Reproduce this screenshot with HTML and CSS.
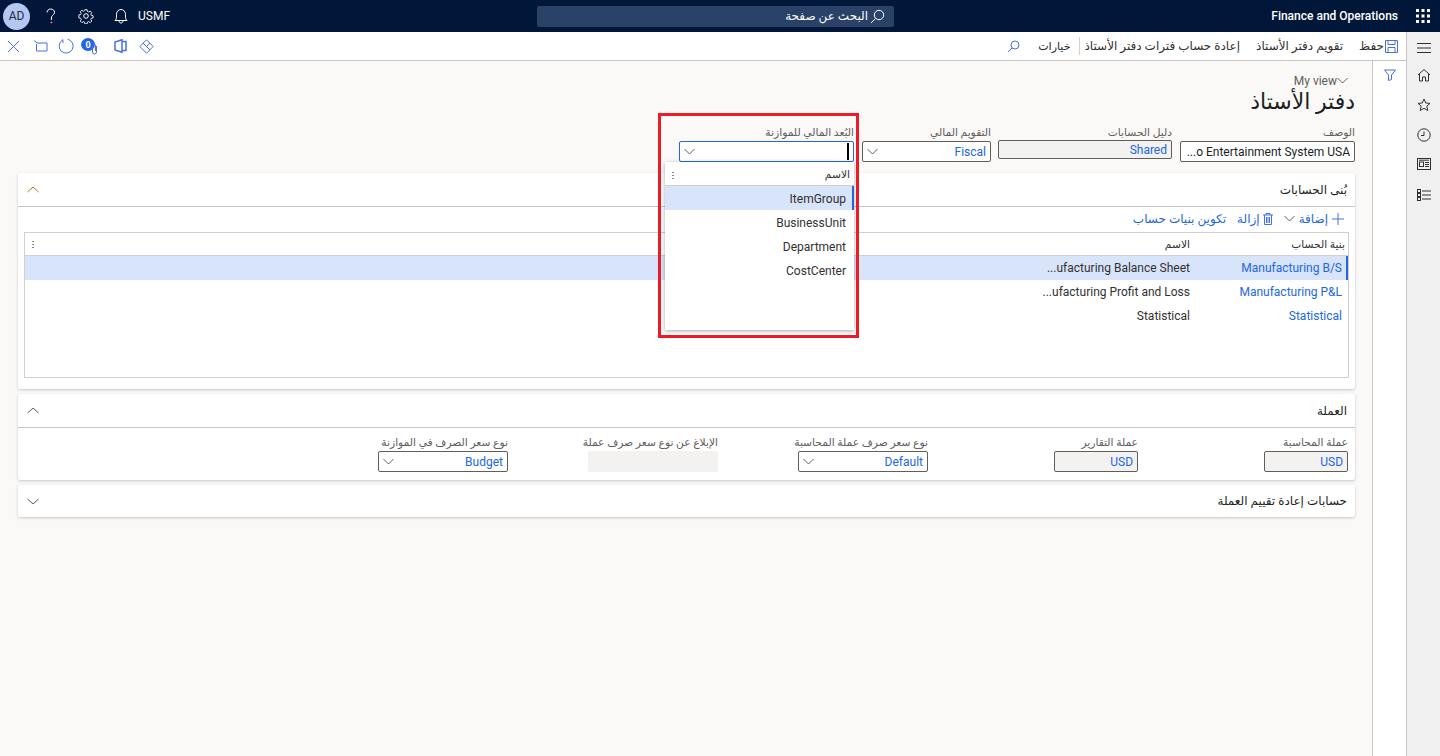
FILE: index.html
```html
<!DOCTYPE html>
<html lang="ar" dir="rtl">
<head>
  <meta charset="UTF-8" />
  <title>Finance and Operations</title>
  <link rel="stylesheet" href="styles.css">
</head>
<body>
  <header class="topbar" dir="ltr">
    <div class="top-left">
      <span class="avatar">AD</span>
      <svg class="top-icon help" width="10" height="16" viewBox="0 0 10 16"><path d="M1 4.500C1 2.500 2.700 1 4.700 1S8.500 2.300 8.500 4.200c0 1.500-.9 2.300-1.900 3.100-.9.700-1.200 1.500-1.200 4.700"/><circle cx="5.400" cy="14.500" r=".6" class="solid"/></svg>
      <svg class="top-icon gear" width="16" height="16" viewBox="0 0 16 16"><circle cx="8" cy="8" r="2.300"/><path d="M6.800 1h2.400l.4 2 1.400.6 1.700-1.100 1.700 1.700-1.100 1.700.6 1.400 2 .4v2.400l-2 .4-.6 1.400 1.100 1.700-1.700 1.700-1.700-1.100-1.400.6-.4 2H6.800l-.4-2-1.400-.6-1.700 1.100-1.700-1.700 1.100-1.700-.6-1.400-2-.4V6.800l2-.4.6-1.400-1.100-1.700 1.700-1.700L5 2.700l1.400-.6z" transform="translate(.8 .8) scale(.9)"/></svg>
      <svg class="top-icon bell" width="14" height="16" viewBox="0 0 14 16"><path d="M1 12.500c1.200-1 1.500-2.200 1.500-4.500V6.500C2.500 3.500 4.500 1.500 7 1.500s4.500 2 4.500 5V8c0 2.300.3 3.500 1.500 4.500zM5 13c0 1.200.9 2 2 2s2-.8 2-2"/></svg>
      <span class="company">USMF</span>
    </div>
    <div class="search-box" dir="rtl">
      <svg width="15" height="15" viewBox="0 0 15 15" class="top-icon"><circle cx="9" cy="6" r="4.700"/><path d="M5.500 9.500L1 14"/></svg>
      <span>البحث عن صفحة</span>
    </div>
    <div class="top-right">
      <span class="app-name">Finance and Operations</span>
      <svg width="14" height="14" viewBox="0 0 14 14" class="waffle">
        <rect x="0" y="0" width="3" height="3"/><rect x="5.500" y="0" width="3" height="3"/><rect x="11" y="0" width="3" height="3"/>
        <rect x="0" y="5.500" width="3" height="3"/><rect x="5.500" y="5.500" width="3" height="3"/><rect x="11" y="5.500" width="3" height="3"/>
        <rect x="0" y="11" width="3" height="3"/><rect x="5.500" y="11" width="3" height="3"/><rect x="11" y="11" width="3" height="3"/>
      </svg>
    </div>
  </header>

  <div class="shell">
    <nav class="nav-rail">
      <svg class="rail-icon first" width="16" height="12" viewBox="0 0 16 12"><path d="M1 1.500h14M1 6h14M1 10.500h14"/></svg>
      <svg class="rail-icon" width="14" height="14" viewBox="0 0 14 14"><path d="M1 7l6-5.500L13 7M2.500 6v7h3V9h3v4h3V6"/></svg>
      <svg class="rail-icon" width="14" height="14" viewBox="0 0 14 14"><path d="M7 1l1.800 4 4.200.4-3.200 2.800 1 4.300L7 10.300l-3.800 2.200 1-4.300L1 5.400 5.200 5z"/></svg>
      <svg class="rail-icon" width="14" height="14" viewBox="0 0 14 14"><circle cx="7" cy="7" r="6.200"/><path d="M7 3.500V7.500H4"/></svg>
      <svg class="rail-icon" width="14" height="12" viewBox="0 0 14 12"><rect x=".5" y=".5" width="13" height="11"/><rect x="2.500" y="4" width="4" height="4.500"/><path d="M2 2.200h10M8 4.500h4M8 6.500h4M8 8.500h4"/></svg>
      <svg class="rail-icon last" width="14" height="12" viewBox="0 0 14 12"><rect x=".5" y=".5" width="3" height="3"/><rect x=".5" y="4.500" width="3" height="3"/><rect x=".5" y="8.500" width="3" height="3"/><path d="M5 2h9M5 6h9M5 10h9"/></svg>
    </nav>

    <div class="main-col">
      <div class="actionbar">
        <div class="action-group">
          <button class="action save">
            <svg width="13" height="13" viewBox="0 0 13 13" class="blue-icon"><path d="M.5.500h12v12H.5zM3 .5v4h7v-4M3 12.500V7.500h7v5"/></svg>
            حفظ
          </button>
          <button class="action">تقويم دفتر الأستاذ</button>
          <button class="action">إعادة حساب فترات دفتر الأستاذ</button>
          <span class="action-sep"></span>
          <button class="action options">خيارات</button>
          <svg width="13" height="13" viewBox="0 0 13 13" class="blue-icon find"><circle cx="8" cy="5" r="4"/><path d="M5 8L1 12"/></svg>
        </div>
        <div class="action-tools">
          <svg width="15" height="15" viewBox="0 0 15 15" class="blue-icon tool-close"><path d="M2 2l11 11M13 2L2 13"/></svg>
          <svg width="15" height="12" viewBox="0 0 15 12" class="blue-icon tool-folder"><path d="M4 3h10v8H3.500V4M1 .5l3 2.500"/></svg>
          <svg width="16" height="16" viewBox="0 0 16 16" class="blue-icon tool-refresh"><path d="M4.800 1.500L5 5M5 1.800A7 7 0 1 0 9.500 1.200"/></svg>
          <span class="attach">
            <span class="badge">0</span>
            <svg width="7" height="12" viewBox="0 0 7 12" class="blue-icon clip"><path d="M5.500 3v6a2 2 0 0 1-4 0V2.500a1.500 1.500 0 0 1 3 0V8"/></svg>
          </span>
          <svg width="13" height="14" viewBox="0 0 13 14" class="blue-icon tool-office"><path d="M8 .8L1 3v8l7 2.300zM8 2.500h4v9H8" stroke-width="1.500"/></svg>
          <svg width="15" height="15" viewBox="0 0 15 15" class="blue-icon tool-diamond"><path d="M7.500.8l6.700 6.700-6.700 6.700L.8 7.500zM4 4l7 7M11 4l-3.500 3.500"/></svg>
        </div>
      </div>

      <div class="work-row">
        <aside class="filter-pane">
          <svg width="12" height="12" viewBox="0 0 12 12" class="blue-icon"><path d="M.5 1h11L7.500 6v4.500l-3 1V6z"/></svg>
        </aside>

        <main class="content">
          <div class="view-switch" dir="ltr">
            <span>My view</span>
            <svg width="11" height="7" viewBox="0 0 11 7" class="chev"><path d="M.5 1l5 5 5-5"/></svg>
          </div>
          <h1 class="page-title">دفتر الأستاذ</h1>

          <div class="head-fields">
            <div class="field desc">
              <label>الوصف</label>
              <div class="input"><bdi dir="ltr" class="dark">...o Entertainment System USA</bdi></div>
            </div>
            <div class="field chart">
              <label>دليل الحسابات</label>
              <div class="input readonly"><bdi dir="ltr" class="link">Shared</bdi></div>
            </div>
            <div class="field fiscal">
              <label>التقويم المالي</label>
              <div class="input select"><bdi dir="ltr" class="link">Fiscal</bdi><svg width="11" height="7" viewBox="0 0 11 7" class="chev"><path d="M.5 1l5 5 5-5"/></svg></div>
            </div>
            <div class="field budget">
              <label>البُعد المالي للموازنة</label>
              <div class="input select focused"><span class="caret"></span><svg width="11" height="7" viewBox="0 0 11 7" class="chev"><path d="M.5 1l5 5 5-5"/></svg></div>
              <div class="lookup">
                <div class="lookup-head"><span>الاسم</span><span class="dots"></span></div>
                <div class="lookup-row selected" dir="ltr">ItemGroup</div>
                <div class="lookup-row" dir="ltr">BusinessUnit</div>
                <div class="lookup-row" dir="ltr">Department</div>
                <div class="lookup-row" dir="ltr">CostCenter</div>
              </div>
              <div class="callout"></div>
            </div>
          </div>

          <section class="panel">
            <div class="panel-head">
              <h2>بُنى الحسابات</h2>
              <svg width="12" height="7" viewBox="0 0 12 7" class="panel-chev orange"><path d="M.5 6l5.500-5 5.500 5"/></svg>
            </div>
            <div class="panel-body">
              <div class="grid-tools">
                <span class="tool add">
                  <svg width="12" height="12" viewBox="0 0 12 12" class="blue-icon"><path d="M6 0v12M0 6h12"/></svg>
                  إضافة
                  <svg width="11" height="7" viewBox="0 0 11 7" class="chev"><path d="M.5 1l5 5 5-5"/></svg>
                </span>
                <span class="tool">
                  <svg width="10" height="12" viewBox="0 0 10 12" class="blue-icon"><path d="M0 2h10M3 2V.5h4V2M1.500 2v9.500h7V2M3.500 4v6M5 4v6M6.500 4v6"/></svg>
                  إزالة
                </span>
                <span class="tool">تكوين بنيات حساب</span>
              </div>
              <div class="grid">
                <div class="grid-head">
                  <span class="col-a">بنية الحساب</span>
                  <span class="col-b">الاسم</span>
                  <span class="dots"></span>
                </div>
                <div class="grid-row selected">
                  <span class="col-a"><bdi dir="ltr" class="link">Manufacturing B/S</bdi></span>
                  <span class="col-b"><bdi dir="ltr">...ufacturing Balance Sheet</bdi></span>
                </div>
                <div class="grid-row">
                  <span class="col-a"><bdi dir="ltr" class="link">Manufacturing P&amp;L</bdi></span>
                  <span class="col-b"><bdi dir="ltr">...ufacturing Profit and Loss</bdi></span>
                </div>
                <div class="grid-row">
                  <span class="col-a"><bdi dir="ltr" class="link">Statistical</bdi></span>
                  <span class="col-b"><bdi dir="ltr">Statistical</bdi></span>
                </div>
              </div>
            </div>
          </section>

          <section class="panel">
            <div class="panel-head">
              <h2>العملة</h2>
              <svg width="12" height="7" viewBox="0 0 12 7" class="panel-chev"><path d="M.5 6l5.500-5 5.500 5"/></svg>
            </div>
            <div class="currency-grid">
              <div class="field small">
                <label>عملة المحاسبة</label>
                <div class="input readonly"><bdi dir="ltr" class="link">USD</bdi></div>
              </div>
              <div class="field small">
                <label>عملة التقارير</label>
                <div class="input readonly"><bdi dir="ltr" class="link">USD</bdi></div>
              </div>
              <div class="field">
                <label>نوع سعر صرف عملة المحاسبة</label>
                <div class="input select"><bdi dir="ltr" class="link">Default</bdi><svg width="11" height="7" viewBox="0 0 11 7" class="chev"><path d="M.5 1l5 5 5-5"/></svg></div>
              </div>
              <div class="field">
                <label>الإبلاغ عن نوع سعر صرف عملة</label>
                <div class="input empty"></div>
              </div>
              <div class="field">
                <label>نوع سعر الصرف في الموازنة</label>
                <div class="input select"><bdi dir="ltr" class="link">Budget</bdi><svg width="11" height="7" viewBox="0 0 11 7" class="chev"><path d="M.5 1l5 5 5-5"/></svg></div>
              </div>
            </div>
          </section>

          <section class="panel">
            <div class="panel-head closed">
              <h2>حسابات إعادة تقييم العملة</h2>
              <svg width="12" height="7" viewBox="0 0 12 7" class="panel-chev"><path d="M.5 1l5.500 5 5.500-5"/></svg>
            </div>
          </section>
        </main>
      </div>
    </div>
  </div>
</body>
</html>
```

FILE: styles.css
```css
* { box-sizing: border-box; }
html, body { margin: 0; height: 100%; overflow: hidden; }
body { font-family: Roboto, "DejaVu Sans", sans-serif; font-size: 12px; color: #323130; background: #faf9f8; }
svg { fill: none; flex: none; display: block; }
h1, h2 { margin: 0; font-weight: normal; }
button { font: inherit; color: inherit; background: none; border: none; padding: 0; }

/* top bar */
.topbar { height: 32px; background: #00173a; color: #fff; display: grid; grid-template-columns: 537px 357px 1fr; align-items: center; }
.top-left { display: flex; align-items: center; }
.avatar { width: 27px; height: 27px; margin-left: 3px; border-radius: 50%; background: #b4c7f0; color: #1d2b45; font-size: 12px; display: flex; align-items: center; justify-content: center; }
.top-icon { stroke: #fff; stroke-width: 1; }
.top-icon .solid { fill: #fff; stroke: #ef6950; }
.help { margin-left: 16px; }
.gear { margin-left: 22px; }
.bell { margin-left: 20px; }
.company { margin-left: 10px; font-size: 12px; }
.search-box { height: 21px; background: #2a4268; border-radius: 2px; display: flex; align-items: center; gap: 2px; padding-right: 9px; font-size: 12px; }
.top-right { display: flex; align-items: center; justify-content: flex-end; padding-right: 10px; gap: 18px; }
.app-name { font-size: 12px; font-weight: 500; }
.waffle { fill: #fff; }

/* shell */
.shell { display: flex; height: 724px; }
.nav-rail { width: 34px; background: #f0f0f0; border-left: 1px solid #c8c6c4; display: flex; flex-direction: column; align-items: center; padding-top: 10px; gap: 16px; }
.rail-icon { stroke: #323130; stroke-width: 1; }
.rail-icon.first { margin-bottom: -2px; }
.rail-icon.last { margin-top: 3px; }
.main-col { flex: 1; display: flex; flex-direction: column; min-width: 0; }

/* action bar */
.actionbar { height: 29px; flex: none; background: #fff; border-bottom: 1px solid #c8c6c4; display: flex; justify-content: space-between; align-items: center; padding: 0 8px 0 6px; }
.action-group { display: flex; align-items: center; gap: 16px; }
.action { font-size: 12px; display: flex; align-items: center; gap: 1px; white-space: nowrap; }
.action.options { font-size: 11px; color: #201f1e; }
.action-sep { width: 1px; height: 18px; background: #d2d0ce; margin: 0 -12px 0 -7px; }
.find { margin-right: 2px; }
.blue-icon { stroke: #4a6fe0; stroke-width: 1; }
.action-tools { display: flex; align-items: center; flex-direction: row-reverse; }
.tool-folder { margin-left: 12px; }
.tool-refresh { margin-left: 10px; }
.attach { position: relative; width: 18px; height: 16px; margin-left: 7px; }
.tool-office { margin-left: 15px; }
.tool-diamond { margin-left: 12px; }
.badge { position: absolute; left: 0; top: 0; width: 14px; height: 13px; border-radius: 50%; background: #2266e3; color: #fff; font-size: 9px; font-weight: 700; display: flex; align-items: center; justify-content: center; }
.clip { position: absolute; left: 10px; top: 5px; }

/* work area */
.work-row { flex: 1; display: flex; min-height: 0; }
.filter-pane { width: 34px; flex: none; background: #fff; border-left: 1px solid #c8c6c4; padding-top: 8px; display: flex; justify-content: center; }
.content { flex: 1; min-width: 0; padding: 12px 17px 0 18px; }
.view-switch { display: flex; justify-content: flex-end; align-items: center; color: #605e5c; font-size: 12px; height: 15px; margin-right: 7px; }
.chev { stroke: #605e5c; stroke-width: 1; }
.page-title { font-size: 22px; line-height: 28px; color: #201f1e; }

/* fields */
.head-fields { display: flex; gap: 8px; margin-top: 10px; }
.field { display: flex; flex-direction: column; position: relative; }
.field label { font-size: 10.700px; color: #605e5c; line-height: 14px; white-space: nowrap; height: 15px; }
.input { height: 21px; background: #fff; border: 1px solid #605e5c; border-radius: 2px; display: flex; align-items: center; justify-content: space-between; padding: 0 4px; font-size: 12px; white-space: nowrap; }
.input.readonly { background: #f3f2f1; }
.input.empty { background: #f3f2f1; border-color: transparent; }
.link { color: #2266e3; }
.dark { color: #201f1e; }
.desc { width: 175px; }
.chart { width: 174px; margin-left: -1px; }
.chart .input { height: 19px; margin-top: -1px; }
.fiscal { width: 129px; }
.budget { width: 175px; }
.input.focused { border-color: #2266e3; }
.caret { width: 2px; height: 17px; background: #000; }

/* lookup dropdown */
.lookup { position: absolute; top: 36px; right: 0; left: -14px; height: 168px; background: #fff; box-shadow: 0 1px 4px rgba(0,0,0,.35); z-index: 2; }
.lookup-head { height: 24px; padding: 2px 4px 0 7px; display: flex; justify-content: space-between; align-items: center; font-size: 10.700px; border-bottom: 1px solid #d2d0ce; }
.dots { width: 2px; height: 8px; background: radial-gradient(circle, #8a8886 1px, transparent 1px) 0 0 / 2px 3px; }
.lookup-row { height: 24px; line-height: 26px; text-align: right; padding-right: 8px; font-size: 12px; }
.lookup-row.selected { background: #d8e4fa; border-right: 2px solid #2266e3; padding-right: 6px; }
.callout { position: absolute; top: -13px; right: -5px; width: 201px; height: 225px; border: 3px solid #ed1c24; z-index: 3; }

/* panels */
.panel { background: #fff; border-radius: 2px; box-shadow: 0 1px 3px rgba(0,0,0,.2); margin-top: 5px; }
.head-fields + .panel { margin-top: 11px; }
.panel-head { height: 34px; border-bottom: 1px solid #c8c6c4; display: flex; align-items: center; justify-content: space-between; padding: 0 8px 0 9px; }
.panel-head.closed { height: 32px; border-bottom: none; }
.panel-head h2 { font-size: 12px; color: #201f1e; }
.panel-chev { stroke: #605e5c; stroke-width: 1; }
.panel-chev.orange { stroke: #a8783a; }
.panel-body { height: 182px; padding: 0 6px; }

/* grid */
.grid-tools { height: 25px; display: flex; align-items: center; gap: 11px; padding: 0 5px 2px 0; color: #2266e3; font-size: 12px; }
.tool { display: flex; align-items: center; gap: 3px; }
.tool.add { gap: 4px; }
.grid { height: 146px; border: 1px solid #d2d0ce; }
.grid-head { height: 23px; display: flex; align-items: center; font-size: 10.700px; border-bottom: 1px solid #d2d0ce; padding-left: 7px; }
.grid-head .col-b { flex: 1; }
.grid-row { height: 24px; display: flex; align-items: center; }
.grid-row.selected { background: #d8e4fa; box-shadow: inset -2px 0 0 #2266e3; }
.col-a { width: 158px; flex: none; padding-right: 6px; }
.grid-head .col-a { padding-right: 3px; }

/* currency tab */
.currency-grid { display: grid; grid-template-columns: repeat(5, 210px); padding: 8px 7px 0 0; height: 52px; }
.currency-grid .field { width: 130px; }
.currency-grid .field.small { width: 84px; }
```
